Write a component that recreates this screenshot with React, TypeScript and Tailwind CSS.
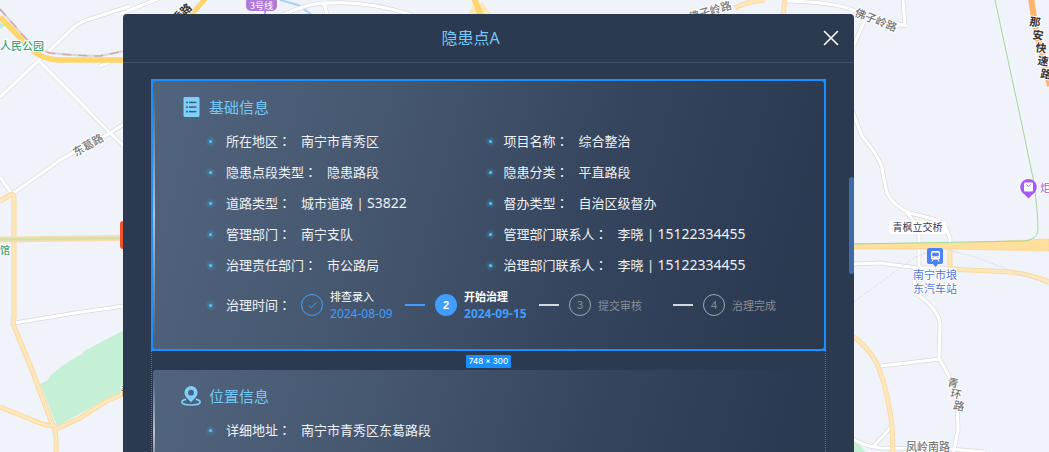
import type { ReactNode } from "react";
import { X, Check } from "lucide-react";

const colon = "font-['Noto_Sans_CJK_TC',sans-serif]";

function Dot() {
  return (
    <span className="flex size-[15px] shrink-0 items-center justify-center rounded-full bg-[radial-gradient(circle,rgba(56,180,240,0.4)_0%,rgba(56,180,240,0.12)_35%,transparent_55%)]">
      <span className="size-[3px] rounded-full bg-[#5cc4fa]" />
    </span>
  );
}

function Field({ label, children, wide }: { label: string; children: ReactNode; wide?: boolean }) {
  return (
    <div className={wide ? "flex h-[31px] items-center gap-2" : "flex h-[31px] items-center gap-[6px]"}>
      <Dot />
      <dl className="flex items-center gap-[10px] whitespace-nowrap">
        <dt>
          {label}
          <span className={colon}>：</span>
        </dt>
        <dd>{children}</dd>
      </dl>
    </div>
  );
}

function Num({ children }: { children: ReactNode }) {
  return <span className="text-[14px] leading-none">{children}</span>;
}

const basic: [string, ReactNode][] = [
  ["所在地区", "南宁市青秀区"],
  ["项目名称", "综合整治"],
  ["隐患点段类型", "隐患路段"],
  ["隐患分类", "平直路段"],
  ["道路类型", <>城市道路 | <Num>S3822</Num></>],
  ["督办类型", "自治区级督办"],
  ["管理部门", "南宁支队"],
  ["管理部门联系人", <>李晓 | <Num>15122334455</Num></>],
  ["治理责任部门", "市公路局"],
  ["治理部门联系人", <>李晓 | <Num>15122334455</Num></>],
];

type StepProps = { n: number; title: string; date?: string; state: "done" | "active" | "todo"; last?: boolean };

const circleStyle = {
  done: "border border-[#409eff] text-[#409eff]",
  active: "bg-[#409eff] font-bold text-white",
  todo: "border border-[#a0a7b1] text-[#878e99]",
};
const titleStyle = { done: "text-white", active: "font-bold text-white", todo: "text-[#878e99]" };

function Step({ n, title, date, state, last }: StepProps) {
  return (
    <li className={last ? "flex items-center" : "flex w-[134px] items-center"}>
      <span className={"flex size-[22px] shrink-0 items-center justify-center rounded-full font-['Liberation_Sans',sans-serif] text-[11px] " + circleStyle[state]}>
        {state === "done" ? <Check size={11} strokeWidth={2} /> : n}
      </span>
      <span className="ml-[7px] flex flex-1 flex-col whitespace-nowrap">
        <span className={"text-[11px] leading-[17px] " + titleStyle[state]}>{title}</span>
        {date && (
          <span className={state === "active" ? "text-[12px] font-bold leading-[17px] text-[#409eff]" : "text-[12px] leading-[17px] text-[#409eff]"}>
            {date}
          </span>
        )}
      </span>
      {!last && <span className={state === "done" ? "mr-[10px] h-[2px] w-5 shrink-0 bg-[#409eff]" : "mr-[10px] h-[2px] w-5 shrink-0 bg-[#d3d8df]"} />}
    </li>
  );
}

function Card({ icon, title, children }: { icon: ReactNode; title: string; children: ReactNode }) {
  return (
    <section className="relative overflow-hidden rounded-[3px] bg-[linear-gradient(105deg,#51647d_0%,#475971_30%,#35455d_64%,#2a3950_95%)] pr-[62px] pl-7">
      <span className="absolute inset-y-2 left-0 w-[2px] bg-gradient-to-b from-transparent via-white/60 to-transparent" />
      <h2 className="flex h-[45px] items-start gap-2 pt-2 text-[15px] text-[#74c8f5]">
        <span className="flex h-9 w-5 shrink-0 items-center justify-center">{icon}</span>
        <span className="font-normal leading-9">{title}</span>
      </h2>
      <div className="pl-[22px]">{children}</div>
    </section>
  );
}

function ListIcon() {
  return (
    <svg width="17" height="20" viewBox="0 0 17 20" aria-hidden="true">
      <rect x="0.5" width="16" height="20" rx="1.5" fill="#7dd0fb" />
      <g fill="#465b74">
        <rect x="3" y="4.700" width="2" height="1.500" />
        <rect x="3" y="9.300" width="2" height="1.500" />
        <rect x="3" y="13.900" width="2" height="1.500" />
        <rect x="6" y="4.700" width="7.500" height="1.500" />
        <rect x="6" y="9.300" width="7.500" height="1.500" />
        <rect x="6" y="13.900" width="7.500" height="1.500" />
      </g>
    </svg>
  );
}

function PlaceIcon() {
  return (
    <svg width="20" height="20" viewBox="0 0 20 20" aria-hidden="true">
      <path d="M5.2 13.4C2.5 13.9.9 14.8.9 16c0 1.800 4 3 9.100 3s9.100-1.200 9.100-3c0-1.200-1.600-2.100-4.300-2.600" fill="none" stroke="#7dd0fb" strokeWidth="1.700" />
      <path fillRule="evenodd" d="M10 0a6.600 6.600 0 0 0-6.600 6.600c0 3.700 3.300 6.300 6.600 9.900 3.300-3.600 6.600-6.200 6.600-9.900A6.600 6.600 0 0 0 10 0Zm0 3.800a2.900 2.900 0 1 1 0 5.800 2.900 2.900 0 0 1 0-5.800Z" fill="#7dd0fb" />
    </svg>
  );
}

const whiteRoads = [
  "M130 6 90 19Q80 22 74 27L50 50 0 97",
  "M38 60 80 102 110 133 124 146",
  "M124 124 110 133 60 160 52 166 12 194 0 177",
  "M100 66 110 62",
  "M15 323 75 313 124 306",
  "M283 15Q310 2 330 3Q370 1 412 15M324 3 327 15",
  "M120 14 160 -2",
  "M785 1Q830 2 850 9L870 17 907 26M903 0 905 25 890 26M864 22 854 45",
  "M850 105 862 136Q880 158 882 168 885 185 887 193 893 206 910 213L937 220M907 213 918 226",
  "M854 264 880 263 918 268 950 268",
  "M919 233 919 268 914 280Q914 290 920 296 940 312 940 325L939 358 950 378Q958 395 958 430L953 455",
  "M881 366 940 359",
  "M946 228 950 238 950 248",
  "M850 437Q862 446 880 448L950 449 985 452M873 447 891 427",
];

const yellowRoads = [
  "M0 201 12 194 14 196 14 316 13 324 30 365 53 426Q57 432 56 455",
  "M0 407 30 419Q44 426 56 426M54 430 80 418 105 402Q112 398 124 394",
  "M735 8Q745 2 765 0M785 0 783 15",
  "M850 334Q868 347 876 362 886 382 892 425L893 455",
  "M950 245 950 268M950 269 1010 272Q1030 274 1049 282",
];

function CityMap() {
  return (
    <svg className="absolute inset-0 size-full font-['Noto_Sans_CJK_SC',sans-serif]" viewBox="0 0 1049 452" preserveAspectRatio="xMinYMin slice" aria-label="地图">
      <rect width="1049" height="452" fill="#f0f3fa" />
      <path d="M0 22 5 26 0 29Z" fill="#bfeed4" />
      <path d="M40 384 48 380 51 375 62 366 73 359 82 354 84 351 130 327V392L100 403 57 426Z" fill="#c6f0d6" />
      <path d="M850 440Q864 445 866 455H850Z" fill="#c6f0d6" />
      <path d="M280 0 298 5 312 15" fill="none" stroke="#a9d0fb" strokeWidth="2" />
      {whiteRoads.map((d) => (
        <path key={d} d={d} fill="none" stroke="#d9d9dd" strokeWidth="4.500" strokeLinejoin="round" />
      ))}
      {whiteRoads.map((d) => (
        <path key={d} d={d} fill="none" stroke="#fff" strokeWidth="3.200" strokeLinejoin="round" />
      ))}
      {yellowRoads.map((d) => (
        <path key={d} d={d} fill="none" stroke="#fbd9a2" strokeWidth="5" strokeLinejoin="round" />
      ))}
      {yellowRoads.map((d) => (
        <path key={d} d={d} fill="none" stroke="#fde7bb" strokeWidth="3" strokeLinejoin="round" />
      ))}
      <path d="M0 9 20 32Q33 48 50 53 80 56 100 56L124 51" fill="none" stroke="#dcd6dc" strokeWidth="2" />
      <path d="M0 9 20 32Q33 48 50 53 80 56 100 56L124 51" fill="none" stroke="#cfa9b0" strokeWidth="1.500" strokeDasharray="9 7" />
      <path d="M0 17 32 50Q42 59 58 60H130" fill="none" stroke="#ffd66b" strokeWidth="5.500" />
      <path d="M190 16 206-2" fill="none" stroke="#ffd66b" strokeWidth="5" />
      <path d="M468 15 473 5 482 2 492 15Z" fill="#fde7bb" />
      <path d="M474-2 481 16" fill="none" stroke="#ffd66b" strokeWidth="6" />
      <path d="M0 239.500 124 238" fill="none" stroke="#fbdcae" strokeWidth="6" />
      <path d="M0 239.500 124 238" fill="none" stroke="#cfe2ac" strokeWidth="2.500" />
      <path d="M850 243.500 950 243.500 1049 239V251L950 249H850Z" fill="#ffdf9c" stroke="#fbd29a" strokeWidth="0.700" />
      <path d="M995 0 1022 125 1033 178Q1038 210 1038 230 1037 240 1024 241L854 244" fill="none" stroke="#a4d795" strokeWidth="1" />
      <path d="M854 302 915 257 940 248 975 257 1049 285" fill="none" stroke="#dadde3" strokeWidth="0.800" strokeDasharray="3 1" />
      <path d="M1031-2 1036 30 1050 86" fill="none" stroke="#ffb36b" strokeWidth="6" />
      <path d="M265 10V15" stroke="#b07ad8" strokeWidth="1.500" />
      <rect x="120" y="221" width="8" height="28" rx="3" fill="#f0522a" />
      <rect x="246" y="-3" width="31" height="14" rx="5" fill="#ae79d8" />
      <rect x="889" y="221" width="57" height="13" rx="2" fill="#fff" />
      <path d="M929 248H941Q943 248 943 250V262Q943 264 941 264H938L935.500 267 933 264H929Q927 264 927 262V250Q927 248 929 248Z" fill="#4b82f8" />
      <rect x="931" y="251" width="9" height="8.500" rx="1.500" fill="#fff" />
      <path d="M932.500 253H938.500V256H932.500ZM932.500 257.500H934M937 257.500H938.500" fill="#4b82f8" stroke="#4b82f8" strokeWidth="0.600" />
      <path d="M932 261.500 933 259.500M939 261.500 938 259.500" stroke="#fff" strokeWidth="1" />
      <path d="M1028.500 179a8.300 8.300 0 0 0-3.300 15.900L1028.500 198.500 1031.800 194.900A8.300 8.300 0 0 0 1028.500 179Z" fill="#a659f4" />
      <rect x="1024" y="182.500" width="9" height="9" rx="1" fill="#fff" />
      <path d="M1026.500 184.500Q1028.500 188 1030.500 184.500" fill="none" stroke="#a659f4" strokeWidth="1" />
      <g textAnchor="middle" stroke="#fff" strokeWidth="2" strokeLinejoin="round" paintOrder="stroke" fontSize="11">
        <g fill="#3fa27c" fontWeight="500">
          <text x="0" y="50" textAnchor="start">人民公园</text>
          <text x="0" y="254" textAnchor="start" fontSize="10">馆</text>
        </g>
        <g fill="#777" fontWeight="500">
          <text transform="rotate(-30 88 145)" x="88" y="149">东葛路</text>
          <text transform="rotate(-42 183 12)" x="176" y="16" fill="#333" fontWeight="700">青秀路</text>
          <text transform="rotate(-16 710 11)" x="710" y="15">佛子岭路</text>
          <text transform="rotate(21 876 20)" x="876" y="24">佛子岭路</text>
          <text transform="rotate(12 953 383)" x="953" y="387">青</text>
          <text transform="rotate(12 956 394)" x="956" y="398">环</text>
          <text transform="rotate(12 959 406)" x="959" y="410">路</text>
          <text x="928" y="451">凤岭南路</text>
          <text x="126" y="396" fill="#555">青</text>
        </g>
        <g fill="#333" fontWeight="700">
          <text transform="rotate(8 1035 22)" x="1035" y="26">那</text>
          <text transform="rotate(8 1038 35)" x="1038" y="39">安</text>
          <text transform="rotate(8 1041 48)" x="1041" y="52">快</text>
          <text transform="rotate(8 1043 61)" x="1043" y="65">速</text>
          <text transform="rotate(8 1046 74)" x="1046" y="78">路</text>
        </g>
        <g fill="#4f76d8">
          <text x="935" y="279">南宁市埌</text>
          <text x="935" y="293">东汽车站</text>
        </g>
        <text x="1040" y="192" textAnchor="start" fill="#a659d8">炬</text>
      </g>
      <text x="917.500" y="231" textAnchor="middle" fontSize="10" fill="#333a55">青枫立交桥</text>
      <text x="261.500" y="9" textAnchor="middle" fontSize="9" fill="#fff">3号线</text>
    </svg>
  );
}

export default function App() {
  return (
    <main className="relative flex h-screen overflow-hidden pt-[14px] pr-[195px] pl-[123px] font-['Noto_Sans','Noto_Sans_CJK_SC',sans-serif]">
      <CityMap />
      <div role="dialog" aria-labelledby="dialog-title" className="relative flex-1 overflow-hidden rounded-t-[4px] bg-[#2b3a51] text-[13px] text-[#eef2f7]">
        <header className="flex h-[49px] items-center border-b border-[#425063] pr-[10px]">
          <h1 id="dialog-title" className="flex-1 text-center text-[16px] font-normal text-[#74c8f5]">隐患点A</h1>
          <button type="button" aria-label="关闭" className="text-white">
            <X size={26} strokeWidth={1.5} />
          </button>
        </header>
        <div className="px-7 pt-4">
          <div className="border-2 border-[#1890ff] bg-[#1890ff]">
            <Card icon={<ListIcon />} title="基础信息">
              <div className="grid grid-cols-2">
                {basic.map(([label, value], i) => (
                  <Field key={label} label={label} wide={i % 2 === 0}>
                    {value}
                  </Field>
                ))}
              </div>
              <div className="flex h-[68px] items-start gap-2 pt-[6px]">
                <div className="flex h-[36px] items-center gap-2">
                  <Dot />
                  <span className="whitespace-nowrap">
                    治理时间<span className={colon}>：</span>
                  </span>
                </div>
                <ol className="ml-[2px] flex h-[36px] items-center">
                  <Step n={1} title="排查录入" date="2024-08-09" state="done" />
                  <Step n={2} title="开始治理" date="2024-09-15" state="active" />
                  <Step n={3} title="提交审核" state="todo" />
                  <Step n={4} title="治理完成" state="todo" last />
                </ol>
              </div>
            </Card>
          </div>
          <div className="border-x border-dotted border-[#2f7cc4] px-px">
            <div className="flex h-[19px] items-center justify-center pt-[2px]">
              <span className="rounded-[1px] bg-[#1890ff] px-[3px] font-['Inter',sans-serif] text-[8px] font-medium leading-[13px] text-white">748 × 300</span>
            </div>
            <Card icon={<PlaceIcon />} title="位置信息">
              <Field label="详细地址" wide>
                南宁市青秀区东葛路段
              </Field>
              <div className="h-12" />
            </Card>
          </div>
        </div>
        <span className="absolute top-[163px] right-0 h-[97px] w-[5px] rounded-full bg-[#3f6ca8]" />
      </div>
    </main>
  );
}
